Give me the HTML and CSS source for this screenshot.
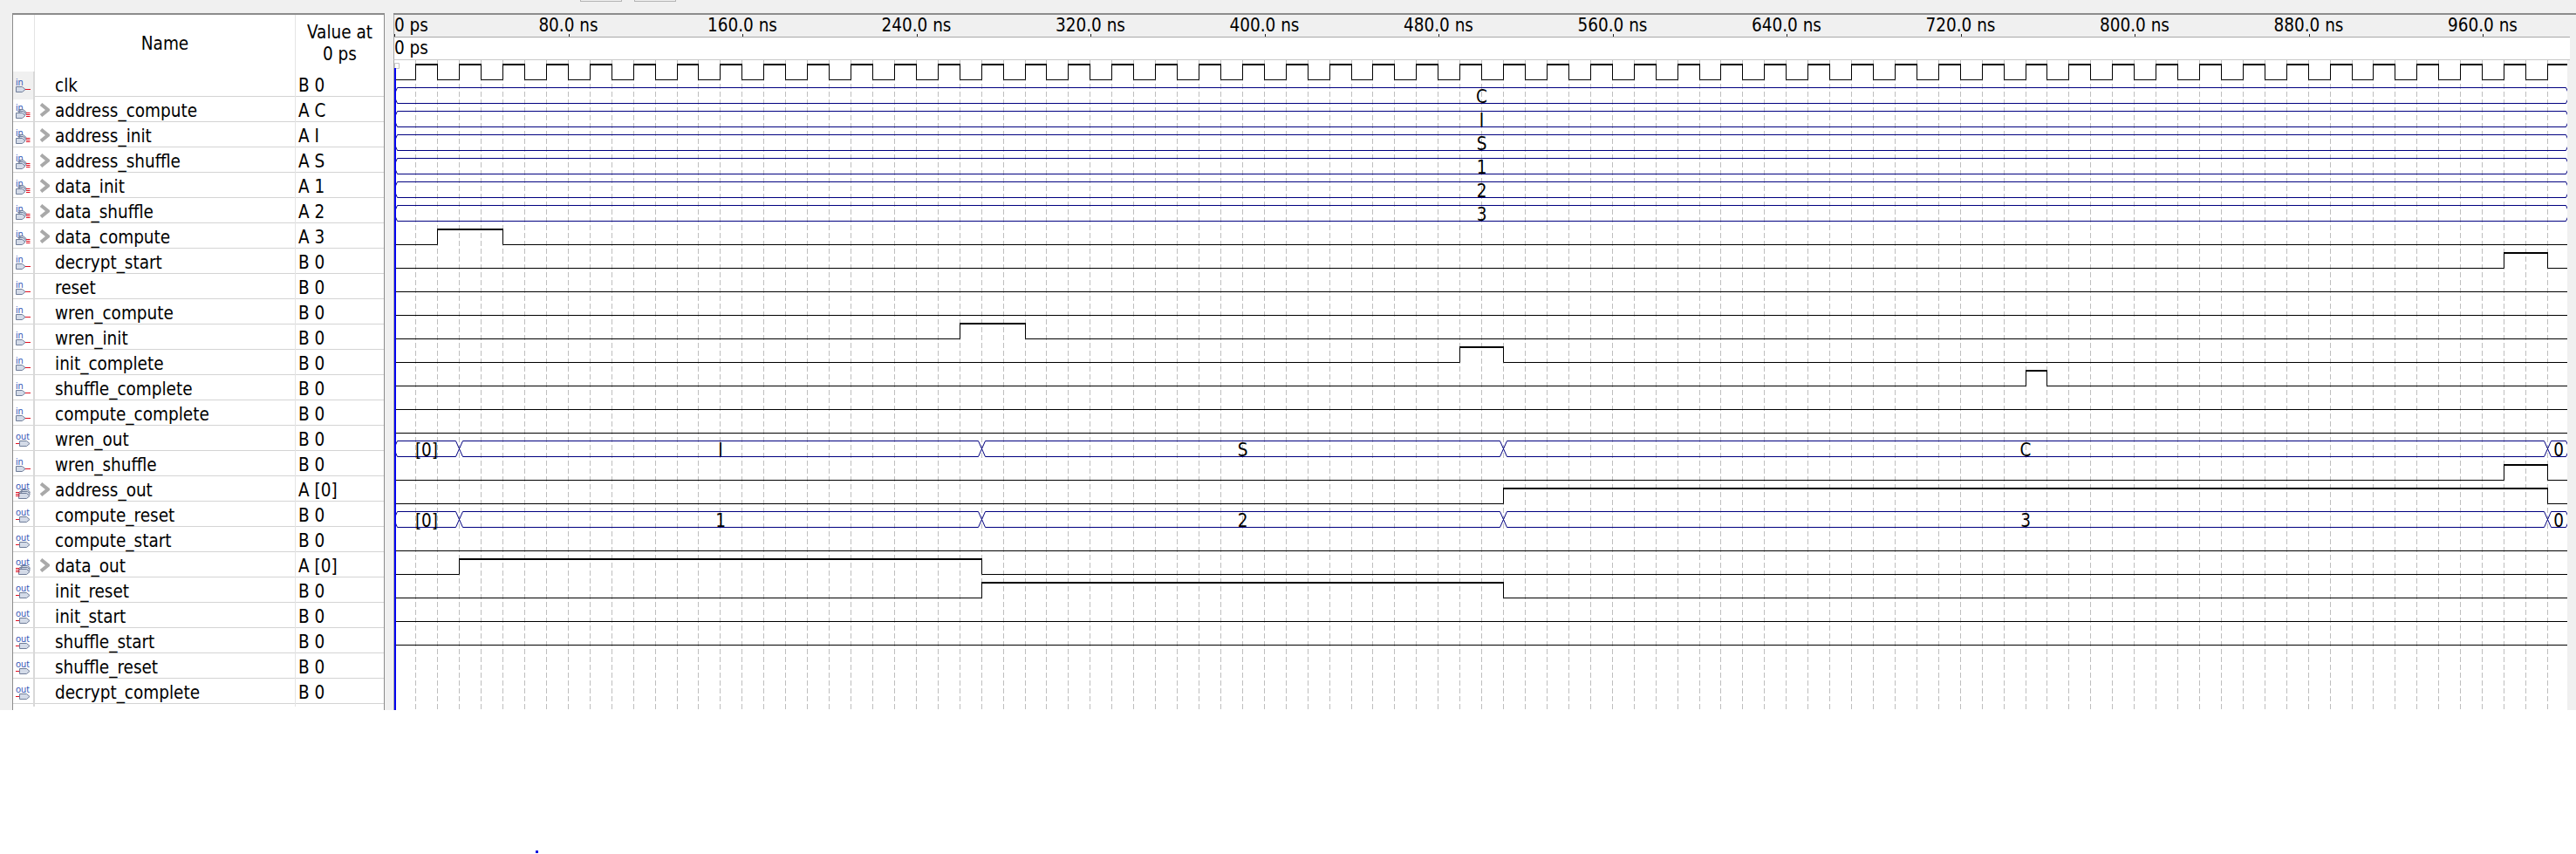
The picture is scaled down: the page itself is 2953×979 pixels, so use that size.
FILE: index.html
```html
<!DOCTYPE html>
<html lang="en">
<head>
  <meta charset="UTF-8">
  <title>Simulation Waveform Editor</title>
  <link rel="stylesheet" href="styles.css">
</head>
<body>

  <svg class="icon-defs" aria-hidden="true">
    <symbol id="pin-in" viewBox="0 0 18 23">
      <path class="pin-body" d="M.5 9.5h7l3.5 3-3.5 3h-7z"/>
      <path class="pin-wire" d="M11 12.5h6"/>
    </symbol>
    <symbol id="pin-in-bus" viewBox="0 0 18 23">
      <path class="pin-body" d="M3.5 6.5h5l3.5 3-2 2z"/>
      <path class="pin-body" d="M2.5 8.5h6l3.5 3-2 2z"/>
      <path class="pin-body" d="M.5 10.5h7l3.5 3-3.5 3h-7z"/>
      <path class="pin-wire" d="M12 10.5h4.500M12 12.5h4.500M12 14.5h4.500"/>
    </symbol>
    <symbol id="pin-out" viewBox="0 0 18 23">
      <path class="pin-wire" d="M0 12.5h6"/>
      <path class="pin-body" d="M4.5 9.5h8l3.5 3-3.5 3h-8z"/>
    </symbol>
    <symbol id="pin-out-bus" viewBox="0 0 18 23">
      <path class="pin-body" d="M5.5 7.5h8l3 2.500-3 3z"/>
      <path class="pin-body" d="M4.500 9.500h9l3 2.500-3 3z"/>
      <path class="pin-body" d="M3.500 11.500h9l3.500 3-3.500 3h-9z"/>
      <path class="pin-wire" d="M0 10.500h4.500M0 12.500h4.500M0 14.500h4.500"/>
    </symbol>
    <symbol id="chevron" viewBox="0 0 12 16">
      <path d="M2 1.500 10 8l-8 6.500" fill="none" stroke="#a9a9a9" stroke-width="4"/>
    </symbol>
  </svg>

  <div class="toolbar">
    <div class="toolbar-btn"></div>
    <div class="toolbar-btn"></div>
  </div>

  <main class="editor">
    <section class="signals">
      <div class="signal-head">
        <div class="head-icon"></div>
        <div class="head-name">Name</div>
        <div class="head-value">Value at<br>0 ps</div>
      </div>

      <div class="signal first"><div class="pin"><svg class="pin-icon" viewBox="0 -3 18 23"><text class="pin-label" y="8">in</text><use href="#pin-in"/></svg></div><div class="name">clk</div><div class="value">B 0</div></div>
      <div class="signal"><div class="pin"><svg class="pin-icon" viewBox="0 -3 18 23"><text class="pin-label" y="8">in</text><use href="#pin-in-bus"/></svg></div><div class="name"><svg class="expander"><use href="#chevron"/></svg>address_compute</div><div class="value">A C</div></div>
      <div class="signal"><div class="pin"><svg class="pin-icon" viewBox="0 -3 18 23"><text class="pin-label" y="8">in</text><use href="#pin-in-bus"/></svg></div><div class="name"><svg class="expander"><use href="#chevron"/></svg>address_init</div><div class="value">A I</div></div>
      <div class="signal"><div class="pin"><svg class="pin-icon" viewBox="0 -3 18 23"><text class="pin-label" y="8">in</text><use href="#pin-in-bus"/></svg></div><div class="name"><svg class="expander"><use href="#chevron"/></svg>address_shuffle</div><div class="value">A S</div></div>
      <div class="signal"><div class="pin"><svg class="pin-icon" viewBox="0 -3 18 23"><text class="pin-label" y="8">in</text><use href="#pin-in-bus"/></svg></div><div class="name"><svg class="expander"><use href="#chevron"/></svg>data_init</div><div class="value">A 1</div></div>
      <div class="signal"><div class="pin"><svg class="pin-icon" viewBox="0 -3 18 23"><text class="pin-label" y="8">in</text><use href="#pin-in-bus"/></svg></div><div class="name"><svg class="expander"><use href="#chevron"/></svg>data_shuffle</div><div class="value">A 2</div></div>
      <div class="signal"><div class="pin"><svg class="pin-icon" viewBox="0 -3 18 23"><text class="pin-label" y="8">in</text><use href="#pin-in-bus"/></svg></div><div class="name"><svg class="expander"><use href="#chevron"/></svg>data_compute</div><div class="value">A 3</div></div>
      <div class="signal"><div class="pin"><svg class="pin-icon" viewBox="0 -3 18 23"><text class="pin-label" y="8">in</text><use href="#pin-in"/></svg></div><div class="name">decrypt_start</div><div class="value">B 0</div></div>
      <div class="signal"><div class="pin"><svg class="pin-icon" viewBox="0 -3 18 23"><text class="pin-label" y="8">in</text><use href="#pin-in"/></svg></div><div class="name">reset</div><div class="value">B 0</div></div>
      <div class="signal"><div class="pin"><svg class="pin-icon" viewBox="0 -3 18 23"><text class="pin-label" y="8">in</text><use href="#pin-in"/></svg></div><div class="name">wren_compute</div><div class="value">B 0</div></div>
      <div class="signal"><div class="pin"><svg class="pin-icon" viewBox="0 -3 18 23"><text class="pin-label" y="8">in</text><use href="#pin-in"/></svg></div><div class="name">wren_init</div><div class="value">B 0</div></div>
      <div class="signal"><div class="pin"><svg class="pin-icon" viewBox="0 -3 18 23"><text class="pin-label" y="8">in</text><use href="#pin-in"/></svg></div><div class="name">init_complete</div><div class="value">B 0</div></div>
      <div class="signal"><div class="pin"><svg class="pin-icon" viewBox="0 -3 18 23"><text class="pin-label" y="8">in</text><use href="#pin-in"/></svg></div><div class="name">shuffle_complete</div><div class="value">B 0</div></div>
      <div class="signal"><div class="pin"><svg class="pin-icon" viewBox="0 -3 18 23"><text class="pin-label" y="8">in</text><use href="#pin-in"/></svg></div><div class="name">compute_complete</div><div class="value">B 0</div></div>
      <div class="signal"><div class="pin"><svg class="pin-icon" viewBox="0 -3 18 23"><text class="pin-label" y="8">out</text><use href="#pin-out"/></svg></div><div class="name">wren_out</div><div class="value">B 0</div></div>
      <div class="signal"><div class="pin"><svg class="pin-icon" viewBox="0 -3 18 23"><text class="pin-label" y="8">in</text><use href="#pin-in"/></svg></div><div class="name">wren_shuffle</div><div class="value">B 0</div></div>
      <div class="signal"><div class="pin"><svg class="pin-icon" viewBox="0 -3 18 23"><text class="pin-label" y="7">out</text><use href="#pin-out-bus"/></svg></div><div class="name"><svg class="expander"><use href="#chevron"/></svg>address_out</div><div class="value">A [0]</div></div>
      <div class="signal"><div class="pin"><svg class="pin-icon" viewBox="0 -3 18 23"><text class="pin-label" y="8">out</text><use href="#pin-out"/></svg></div><div class="name">compute_reset</div><div class="value">B 0</div></div>
      <div class="signal"><div class="pin"><svg class="pin-icon" viewBox="0 -3 18 23"><text class="pin-label" y="8">out</text><use href="#pin-out"/></svg></div><div class="name">compute_start</div><div class="value">B 0</div></div>
      <div class="signal"><div class="pin"><svg class="pin-icon" viewBox="0 -3 18 23"><text class="pin-label" y="7">out</text><use href="#pin-out-bus"/></svg></div><div class="name"><svg class="expander"><use href="#chevron"/></svg>data_out</div><div class="value">A [0]</div></div>
      <div class="signal"><div class="pin"><svg class="pin-icon" viewBox="0 -3 18 23"><text class="pin-label" y="8">out</text><use href="#pin-out"/></svg></div><div class="name">init_reset</div><div class="value">B 0</div></div>
      <div class="signal"><div class="pin"><svg class="pin-icon" viewBox="0 -3 18 23"><text class="pin-label" y="8">out</text><use href="#pin-out"/></svg></div><div class="name">init_start</div><div class="value">B 0</div></div>
      <div class="signal"><div class="pin"><svg class="pin-icon" viewBox="0 -3 18 23"><text class="pin-label" y="8">out</text><use href="#pin-out"/></svg></div><div class="name">shuffle_start</div><div class="value">B 0</div></div>
      <div class="signal"><div class="pin"><svg class="pin-icon" viewBox="0 -3 18 23"><text class="pin-label" y="8">out</text><use href="#pin-out"/></svg></div><div class="name">shuffle_reset</div><div class="value">B 0</div></div>
      <div class="signal"><div class="pin"><svg class="pin-icon" viewBox="0 -3 18 23"><text class="pin-label" y="8">out</text><use href="#pin-out"/></svg></div><div class="name">decrypt_complete</div><div class="value">B 0</div></div>
    </section>

    <section class="waves">
      <div class="ruler">
        <span class="tick zero">0 ps</span>
        <span class="tick">80.0 ns</span>
        <span class="tick">160.0 ns</span>
        <span class="tick">240.0 ns</span>
        <span class="tick">320.0 ns</span>
        <span class="tick">400.0 ns</span>
        <span class="tick">480.0 ns</span>
        <span class="tick">560.0 ns</span>
        <span class="tick">640.0 ns</span>
        <span class="tick">720.0 ns</span>
        <span class="tick">800.0 ns</span>
        <span class="tick">880.0 ns</span>
        <span class="tick">960.0 ns</span>
      </div>
      <div class="cursor-bar">0 ps</div>
      <svg id="wave" class="wave-canvas" viewBox="452 69 2491 745" width="2491" height="745"></svg>
    </section>
  </main>

  <div class="stray-dot"></div>

  <script src="wave.js"></script>
</body>
</html>
```

FILE: styles.css
```css
html, body {
  margin: 0;
  height: 979px;
  overflow: hidden;
  background: #fff;
  font-family: "DejaVu Sans Condensed", "Noto Sans", sans-serif;
  font-stretch: condensed;
  font-size: 20.5px;
  color: #000;
}

.icon-defs {
  position: absolute;
  width: 0;
  height: 0;
}

.toolbar {
  display: flex;
  gap: 14px;
  height: 15px;
  padding-left: 665px;
  background: #f0f0f0;
}

.toolbar-btn {
  width: 46px;
  height: 1px;
  border: 1px solid #b4b4b4;
  border-top: none;
}

.editor {
  display: flex;
  gap: 10px;
  height: 799px;
  padding-left: 14px;
  background: #f0f0f0;
}

/* left table */
.signals {
  box-sizing: border-box;
  width: 427px;
  background: #fff;
  border: 1px solid #8c8c8c;
  border-top: 2px solid #8c8c8c;
  border-bottom: none;
}

.signal-head,
.signal {
  display: grid;
  grid-template-columns: 25px 299px 101px;
}

.signal-head {
  height: 65px;
  text-align: center;
}

.head-icon {
  border-right: 1px solid #e4e4e4;
}

.head-name {
  border-right: 1px solid #e4e4e4;
  line-height: 67px;
}

.head-value {
  line-height: 25px;
  padding-top: 8px;
}

.signal {
  box-sizing: border-box;
  height: 29px;
  border-bottom: 1px solid #d4d4d4;
  line-height: 32px;
  white-space: nowrap;
}

.pin {
  box-sizing: border-box;
  padding: 5px 0 0 3px;
  border-right: 2px solid #d8d8d8;
}

.signal.first .pin {
  background: #f0f0f0;
}

.pin-icon {
  display: block;
  width: 18px;
  height: 23px;
}

.pin-label {
  font-family: "Noto Sans", sans-serif;
  font-size: 10px;
  fill: #3355b5;
}

.pin-body {
  fill: #d4dbe8;
  stroke: #6f7d99;
  stroke-width: 1;
}

.pin-wire {
  fill: none;
  stroke: #e01020;
  stroke-width: 1;
}

.name {
  position: relative;
  padding-left: 23px;
  border-right: 1px solid #e4e4e4;
}

.expander {
  position: absolute;
  left: 5px;
  top: 7px;
  width: 12px;
  height: 16px;
}

.value {
  padding-left: 3px;
}

/* right panel */
.waves {
  flex: 1;
  box-sizing: border-box;
  padding-right: 10px;
  border-top: 2px solid #8c8c8c;
}

.ruler {
  display: flex;
  height: 25px;
  border-bottom: 1px solid #a8a8a8;
  border-left: 1px solid #a8a8a8;
  line-height: 24px;
  white-space: nowrap;
}

.tick {
  position: relative;
  flex: 0 0 199.5px;
  text-align: center;
}

.tick::after {
  content: "";
  position: absolute;
  left: 50%;
  bottom: 0;
  width: 1px;
  height: 3px;
  background: #222;
}

.tick.zero {
  flex-basis: 99.75px;
  text-align: left;
}

.tick.zero::after {
  left: 0;
}

.cursor-bar {
  height: 25px;
  border-bottom: 1px solid #c8c8c8;
  border-left: 1px solid #a8a8a8;
  background: #fff;
  line-height: 24px;
}

.wave-canvas {
  display: block;
  margin-left: 1px;
  background: #fff;
  box-shadow: -1px 0 0 #a8a8a8;
}

.grid {
  fill: none;
  stroke: #bebebe;
  stroke-width: 1;
  stroke-dasharray: 6 3;
}

.wire {
  fill: none;
  stroke: #000;
  stroke-width: 1;
}

.wire-high {
  fill: none;
  stroke: #000;
  stroke-width: 2;
}

.bus {
  fill: none;
  stroke: #000080;
  stroke-width: 1;
}

.bus-label {
  font-size: 20.5px;
  text-anchor: middle;
  fill: #000;
}

.cursor {
  fill: none;
  stroke: #0000f0;
  stroke-width: 2;
}

.cursor-flag {
  fill: #fff;
  stroke: #c4c4c4;
  stroke-width: 1;
}

.stray-dot {
  width: 3px;
  height: 3px;
  margin: 161px 0 0 614px;
  background: #0000e0;
}
```

FILE: wave.js
```js
const svg = document.getElementById("wave");
const NS = "http://www.w3.org/2000/svg";

// k is a time in 10 ns steps
function X(k) {
  return Math.floor(451.9 + 24.935 * k) + 0.5;
}

function add(tag, cls, attrs, text) {
  const el = document.createElementNS(NS, tag);
  el.setAttribute("class", cls);
  for (const key in attrs) el.setAttribute(key, attrs[key]);
  if (text) el.textContent = text;
  svg.appendChild(el);
}

// grid
let grid = "";
for (let k = 1; k < 100; k++) grid += `M${X(k)} 69V814`;
add("path", "grid", { d: grid });

// single bit rows: row number -> list of [rise, fall]
const clock = [];
for (let k = 1; k < 100; k += 2) clock.push([k, k + 1]);

const wires = {
  0: clock,
  7: [[2, 5]],
  8: [[97, 99]],
  9: [],
  10: [],
  11: [[26, 29]],
  12: [[49, 51]],
  13: [[75, 76]],
  14: [],
  15: [],
  17: [[97, 99]],
  18: [[51, 99]],
  20: [],
  21: [[3, 27]],
  22: [[27, 51]],
  23: [],
  24: [],
};

for (const row in wires) {
  const low = 91.5 + 27 * row;
  const high = low - 17.5;
  let thin = `M452 ${low}`;
  let thick = "";
  for (const [a, b] of wires[row]) {
    thin += `H${X(a)}V${high}M${X(b)} ${high}V${low}`;
    thick += `M${X(a) - 0.5} ${high}H${X(b) + 0.5}`;
  }
  thin += "H2943";
  add("path", "wire", { d: thin });
  if (thick) add("path", "wire-high", { d: thick });
}

// bus rows: row number -> times and the value in between
const full = (label) => ({ times: [0, 100], labels: [label] });
const buses = {
  1: full("C"),
  2: full("I"),
  3: full("S"),
  4: full("1"),
  5: full("2"),
  6: full("3"),
  16: { times: [0, 3, 27, 51, 99, 100], labels: ["[0]", "I", "S", "C", "0"] },
  19: { times: [0, 3, 27, 51, 99, 100], labels: ["[0]", "1", "2", "3", "0"] },
};

for (const row in buses) {
  const top = 100.5 + 27 * (row - 1);
  const bottom = top + 18;
  const mid = top + 9;
  const { times, labels } = buses[row];
  labels.forEach((label, i) => {
    const x0 = X(times[i]);
    const x1 = X(times[i + 1]);
    const d = `M${x0 + 4} ${top}H${x1 - 4}L${x1} ${mid}L${x1 - 4} ${bottom}H${x0 + 4}L${x0} ${mid}Z`;
    add("path", "bus", { d });
    add("text", "bus-label", { x: (x0 + x1) / 2, y: bottom - 1 }, label);
  });
}

// cursor at 0 ps
add("path", "cursor-flag", { d: "M452.500 72.500h5v6h-5z" });
add("path", "cursor", { d: "M453 78V814" });
```
